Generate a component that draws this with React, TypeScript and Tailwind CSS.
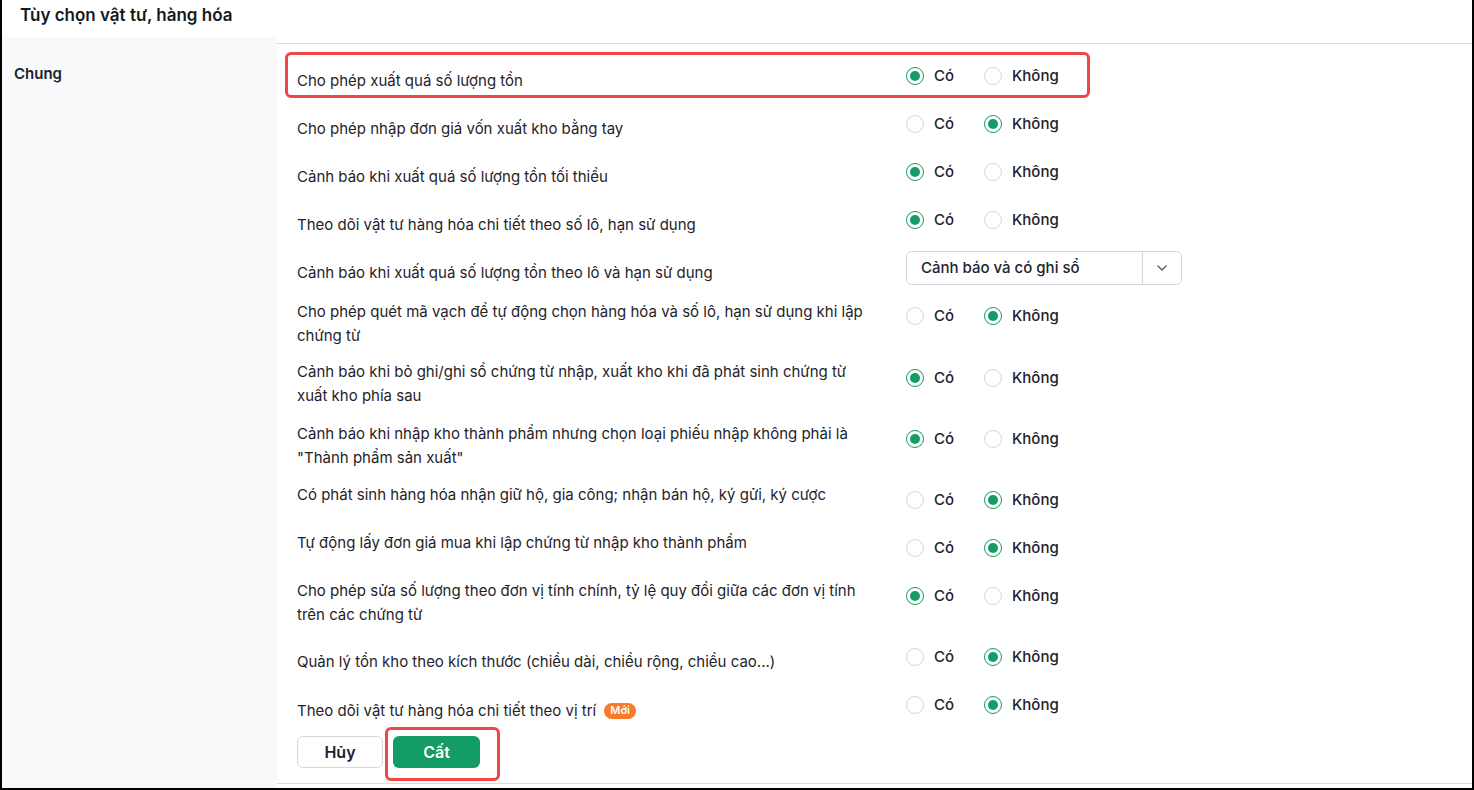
import { ChevronDown } from "lucide-react"

type Choice = "yes" | "no" | "select"

type OptionRow = {
  label: string
  value: Choice
  pad: string
  height: string
  isNew?: boolean
  highlight?: boolean
}

const rows: OptionRow[] = [
  { label: "Cho phép xuất quá số lượng tồn", value: "yes", pad: "pt-[16px]", height: "h-[48px]", highlight: true },
  { label: "Cho phép nhập đơn giá vốn xuất kho bằng tay", value: "no", pad: "pt-[16px]", height: "h-[48px]" },
  { label: "Cảnh báo khi xuất quá số lượng tồn tối thiểu", value: "yes", pad: "pt-[16px]", height: "h-[48px]" },
  { label: "Theo dõi vật tư hàng hóa chi tiết theo số lô, hạn sử dụng", value: "yes", pad: "pt-[16px]", height: "h-[48px]" },
  { label: "Cảnh báo khi xuất quá số lượng tồn theo lô và hạn sử dụng", value: "select", pad: "pt-[16px]", height: "h-[48px]" },
  {
    label: "Cho phép quét mã vạch để tự động chọn hàng hóa và số lô, hạn sử dụng khi lập chứng từ",
    value: "no",
    pad: "pt-[7px]",
    height: "h-[62px]",
  },
  {
    label: "Cảnh báo khi bỏ ghi/ghi sổ chứng từ nhập, xuất kho khi đã phát sinh chứng từ xuất kho phía sau",
    value: "yes",
    pad: "pt-[5px]",
    height: "h-[61px]",
  },
  {
    label: "Cảnh báo khi nhập kho thành phẩm nhưng chọn loại phiếu nhập không phải là \"Thành phẩm sản xuất\"",
    value: "yes",
    pad: "pt-[6px]",
    height: "h-[61px]",
  },
  { label: "Có phát sinh hàng hóa nhận giữ hộ, gia công; nhận bán hộ, ký gửi, ký cược", value: "no", pad: "pt-[6px]", height: "h-[48px]" },
  { label: "Tự động lấy đơn giá mua khi lập chứng từ nhập kho thành phẩm", value: "no", pad: "pt-[6px]", height: "h-[48px]" },
  {
    label: "Cho phép sửa số lượng theo đơn vị tính chính, tỷ lệ quy đổi giữa các đơn vị tính trên các chứng từ",
    value: "yes",
    pad: "pt-[6px]",
    height: "h-[61px]",
  },
  { label: "Quản lý tồn kho theo kích thước (chiều dài, chiều rộng, chiều cao...)", value: "no", pad: "pt-[16px]", height: "h-[48px]" },
  { label: "Theo dõi vật tư hàng hóa chi tiết theo vị trí", value: "no", pad: "pt-[17px]", height: "h-[48px]", isNew: true },
]

function Radio({ checked }: { checked: boolean }) {
  return checked ? (
    <span className="flex h-[18px] w-[18px] items-center justify-center rounded-full border-[1.5px] border-[#139c63] bg-white">
      <span className="h-[10px] w-[10px] rounded-full bg-[#139c63]" />
    </span>
  ) : (
    <span className="h-[18px] w-[18px] rounded-full border border-[#d4d6da] bg-white" />
  )
}

function YesNo({ value }: { value: Choice }) {
  return (
    <div className="flex h-[24px] items-center text-[15px] font-medium text-[#1c2230]">
      <label className="flex w-[78px] items-center gap-[10px]">
        <Radio checked={value === "yes"} />
        <span>Có</span>
      </label>
      <label className="flex items-center gap-[10px]">
        <Radio checked={value === "no"} />
        <span>Không</span>
      </label>
    </div>
  )
}

function PostingSelect() {
  return (
    <div className="mt-[6px] flex h-[34px] w-[276px] items-center rounded-[6px] border border-[#d4d6da] bg-white">
      <span className="flex-1 pl-[14px] text-[15px] font-medium text-[#1c2230]">Cảnh báo và có ghi sổ</span>
      <span className="flex h-full w-[39px] items-center justify-center border-l border-[#d4d6da]">
        <ChevronDown size={16} strokeWidth={2} className="text-[#555b66]" />
      </span>
    </div>
  )
}

export default function App() {
  return (
    <div className="flex h-[790px] w-[1474px] flex-col border-x-2 border-b-2 border-black bg-white font-['Inter','Noto_Sans',sans-serif] text-[#1f2329]">
      <div className="flex h-[37px] items-center pb-[5px] pl-[18px] text-[17px] font-semibold text-[#141820]">
        Tùy chọn vật tư, hàng hóa
      </div>

      <div className="flex flex-1">
        <aside className="w-[275px] bg-[#f8f9fb] pl-[12px] pt-[26px]">
          <div className="text-[15px] font-semibold leading-[22px] text-[#1c2230]">Chung</div>
        </aside>

        <main className="flex flex-1 flex-col pt-[6px]">
          <div className="flex flex-1 flex-col border-y border-[#dcdde0] px-[20px] pt-[9px]">
            {rows.map((row) => (
              <div key={row.label} className={`relative flex items-start ${row.height}`}>
                {row.highlight && (
                  <div className="pointer-events-none absolute left-[-12px] top-[-1px] h-[46px] w-[805px] rounded-[6px] border-[3px] border-[#f24545]" />
                )}
                <div className={`w-[609px] pr-[29px] text-[15px] leading-6 ${row.pad}`}>
                  {row.label}
                  {row.isNew && (
                    <span className="ml-[8px] inline-flex h-[16px] items-center rounded-full bg-[#fb7a29] px-[6px] align-[2px] text-[11px] font-semibold leading-none text-white">
                      Mới
                    </span>
                  )}
                </div>
                <div className="pt-[11px]">
                  {row.value === "select" ? (
                    <div className="-mt-[11px]">
                      <PostingSelect />
                    </div>
                  ) : (
                    <YesNo value={row.value} />
                  )}
                </div>
              </div>
            ))}

            <div className="mt-[6px] flex gap-[10px]">
              <button className="h-[32px] w-[86px] rounded-[6px] border border-[#d4d6da] bg-white text-[16px] font-semibold text-[#1c2230]">
                Hủy
              </button>
              <div className="relative">
                <div className="pointer-events-none absolute left-[-8px] top-[-9px] h-[54px] w-[115px] rounded-[6px] border-[3px] border-[#f24545]" />
                <button className="h-[32px] w-[87px] rounded-[6px] bg-[#139c63] text-[16px] font-semibold text-white">
                  Cất
                </button>
              </div>
            </div>
          </div>
          <div className="h-[4px]" />
        </main>
      </div>
    </div>
  )
}
